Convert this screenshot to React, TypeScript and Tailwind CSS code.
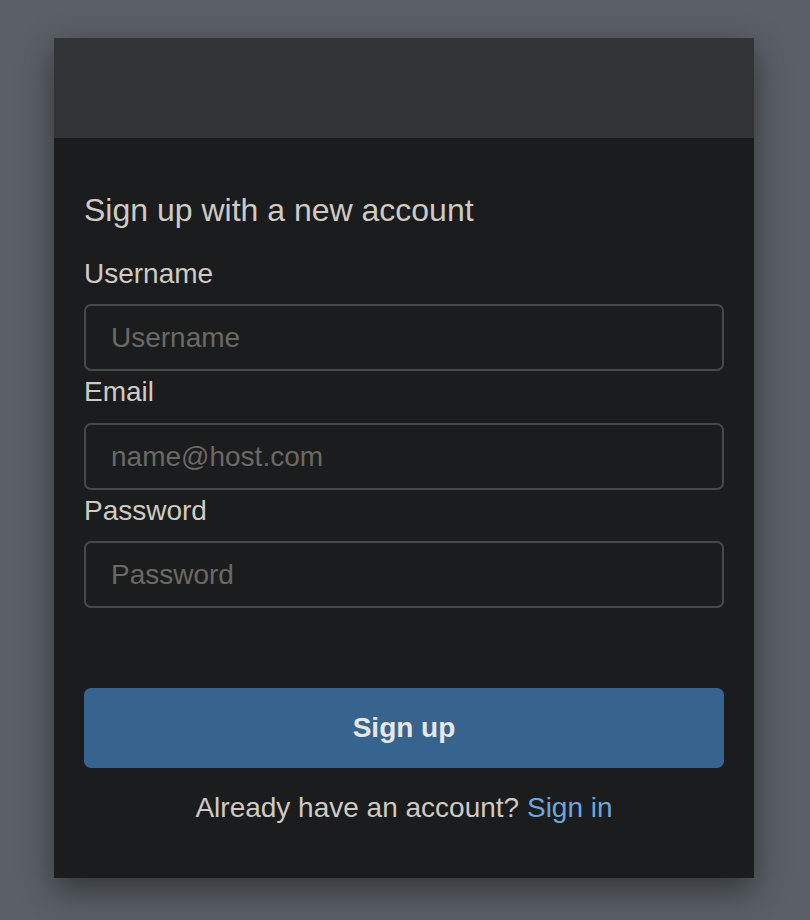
export default function App() {
  return (
    <div className="min-h-[920px] w-full bg-[#5a6066] pt-[38px] pl-[54px] font-['Liberation_Sans',Arial,sans-serif]">
      <div className="w-[700px] bg-[#1b1c1e] shadow-[0_12px_32px_rgba(0,0,0,0.45)]">
        {/* header band */}
        <div className="h-[100px] bg-[#313538]" />

        <form className="flex flex-col px-[30px] pt-[53px] pb-[53px]">
          <h1 className="text-[32px] leading-[38px] font-normal text-[#cfcac3]">Sign up with a new account</h1>

          <label className="mt-[28px] mb-[13px] text-[28px] leading-[34px] text-[#cfcac3]">Username</label>
          <input
            className="h-[67px] w-full rounded-[7px] border-2 border-[#44494c] bg-transparent px-[25px] text-[28px] text-[#cfcac3] placeholder:text-[#6b6964] outline-none"
            placeholder="Username"
          />

          <label className="mt-[4px] mb-[14px] text-[28px] leading-[34px] text-[#cfcac3]">Email</label>
          <input
            className="h-[67px] w-full rounded-[7px] border-2 border-[#44494c] bg-transparent px-[25px] text-[28px] text-[#cfcac3] placeholder:text-[#6b6964] outline-none"
            placeholder="name@host.com"
          />

          <label className="mt-[4px] mb-[13px] text-[28px] leading-[34px] text-[#cfcac3]">Password</label>
          <input
            type="password"
            className="h-[67px] w-full rounded-[7px] border-2 border-[#44494c] bg-transparent px-[25px] text-[28px] text-[#cfcac3] placeholder:text-[#6b6964] outline-none"
            placeholder="Password"
          />

          <button
            type="button"
            className="mt-[80px] h-[80px] w-full rounded-[7px] bg-[#37638f] text-[28px] font-bold text-[#e8e6e3]"
          >
            Sign up
          </button>

          <p className="mt-[23px] text-center text-[28px] leading-[34px] text-[#cfcac3]">
            Already have an account? <a className="text-[#6ca7da]">Sign in</a>
          </p>
        </form>
      </div>
    </div>
  )
}
